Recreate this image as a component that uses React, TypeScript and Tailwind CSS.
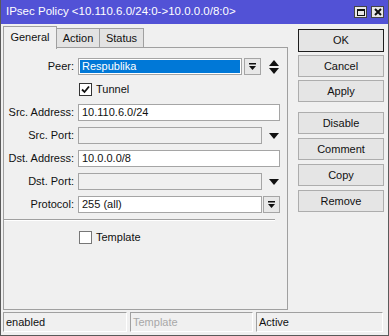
import React from "react";

const font = { fontFamily: '"Liberation Sans", Arial, sans-serif' };

function BarArrow() {
  return (
    <svg width="9" height="9" viewBox="0 0 9 9">
      <rect x="1" y="1" width="7" height="1.5" fill="#111" />
      <path d="M1 4 L8 4 L4.5 8 Z" fill="#111" />
    </svg>
  );
}

function DownArrow() {
  return (
    <svg width="10" height="6" viewBox="0 0 10 6">
      <path d="M0 0 L10 0 L5 6 Z" fill="#111" />
    </svg>
  );
}

function UpDown() {
  return (
    <svg width="10" height="14" viewBox="0 0 10 14">
      <path d="M5 0 L10 6 L0 6 Z" fill="#111" />
      <path d="M0 8 L10 8 L5 14 Z" fill="#111" />
    </svg>
  );
}

function Check({ checked }: { checked: boolean }) {
  return (
    <div className="w-[13px] h-[13px] bg-white border border-[#333] flex items-center justify-center">
      {checked && (
        <svg width="9" height="9" viewBox="0 0 9 9">
          <path d="M1 4.5 L3.5 7 L8 1.5" stroke="#111" strokeWidth="1.8" fill="none" />
        </svg>
      )}
    </div>
  );
}

function Label({ text }: { text: string }) {
  return <div className="w-[71px] text-right pr-[1px] shrink-0">{text}</div>;
}

function Row({ children }: { children: React.ReactNode }) {
  return <div className="flex items-center h-[17px] gap-[3px]">{children}</div>;
}

function Field({ value, w, disabled }: { value?: string; w: string; disabled?: boolean }) {
  return (
    <div
      className={`${w} h-[17px] border border-[#a5a5a5] pl-[3px] flex items-center ${
        disabled ? "bg-[#f0f0f0]" : "bg-white"
      }`}
    >
      {value}
    </div>
  );
}

function Btn({ label, def }: { label: string; def?: boolean }) {
  return (
    <div
      className={`w-[86px] flex items-center justify-center bg-[#e5e5e5] border ${
        def ? "h-[23px] border-[#1e1e1e]" : "h-[22px] border-[#adadad]"
      }`}
    >
      {label}
    </div>
  );
}

function Status({ text, dim, w }: { text: string; dim?: boolean; w: string }) {
  return (
    <div
      className={`${w} h-[20px] border-t border-l border-[#a0a0a0] border-b-white border-r-white border-b border-r pl-[2px] flex items-center ${
        dim ? "text-[#a8a8a8]" : "text-[#111]"
      }`}
    >
      {text}
    </div>
  );
}

export default function App() {
  return (
    <div
      className="w-[389px] h-[336px] flex flex-col bg-[#f0f0f0] border-x border-b border-[#5a5a5a] text-[11px] text-[#111]"
      style={font}
    >
      <div className="h-[24px] bg-[#5252d6] flex items-center justify-between pl-[5px] pr-[4px] text-white text-[11.5px]">
        <span>IPsec Policy &lt;10.110.6.0/24:0-&gt;10.0.0.0/8:0&gt;</span>
        <div className="flex gap-[4px]">
          <div className="w-[13px] h-[12px] bg-[#e8e8e8] border border-[#444] flex items-center justify-center">
            <div className="w-[8px] h-[7px] border border-[#111] border-t-2" />
          </div>
          <div className="w-[13px] h-[12px] bg-[#e8e8e8] border border-[#444] flex items-center justify-center">
            <svg width="8" height="8" viewBox="0 0 8 8">
              <path d="M1 1 L7 7 M7 1 L1 7" stroke="#111" strokeWidth="2" />
            </svg>
          </div>
        </div>
      </div>

      <div className="flex mt-[2px] h-[284px]">
        <div className="ml-[2px] w-[285px] flex flex-col">
          <div className="flex items-end h-[22px]">
            <div className="w-[54px] h-[23px] border border-b-0 border-[#a0a0a0] bg-[#f0f0f0] flex items-center justify-center pb-[2px] relative top-[1px]">
              General
            </div>
            <div className="w-[43px] h-[20px] border-t border-r border-b border-[#a0a0a0] bg-[#e3e3e3] flex items-center justify-center">
              Action
            </div>
            <div className="w-[44px] h-[20px] border-t border-r border-b border-[#a0a0a0] bg-[#e3e3e3] flex items-center justify-center">
              Status
            </div>
            <div className="flex-1 border-b border-[#a0a0a0]" />
          </div>
          <div className="flex-1 border-x border-b border-[#a0a0a0] pt-[10px] flex flex-col gap-[6px]">
            <Row>
              <Label text="Peer:" />
              <div className="w-[164px] h-[17px] border border-[#a5a5a5] bg-white p-[1px]">
                <div className="h-full bg-[#0078d7] text-white pl-[2px] flex items-center">Respublika</div>
              </div>
              <div className="ml-[-1px] w-[17px] h-[17px] border border-[#a5a5a5] bg-[#e8e8e8] flex items-center justify-center">
                <BarArrow />
              </div>
              <div className="ml-[5px]">
                <UpDown />
              </div>
            </Row>
            <Row>
              <div className="w-[71px] shrink-0" />
              <div className="ml-[1px] flex items-center gap-[4px]">
                <Check checked />
                <span>Tunnel</span>
              </div>
            </Row>
            <Row>
              <Label text="Src. Address:" />
              <Field value="10.110.6.0/24" w="w-[202px]" />
            </Row>
            <Row>
              <Label text="Src. Port:" />
              <Field w="w-[184px]" disabled />
              <div className="ml-[4px]">
                <DownArrow />
              </div>
            </Row>
            <Row>
              <Label text="Dst. Address:" />
              <Field value="10.0.0.0/8" w="w-[202px]" />
            </Row>
            <Row>
              <Label text="Dst. Port:" />
              <Field w="w-[184px]" disabled />
              <div className="ml-[4px]">
                <DownArrow />
              </div>
            </Row>
            <Row>
              <Label text="Protocol:" />
              <Field value="255 (all)" w="w-[184px]" />
              <div className="ml-[-2px] w-[17px] h-[17px] border border-[#a5a5a5] bg-[#e8e8e8] flex items-center justify-center">
                <BarArrow />
              </div>
            </Row>
            <div className="mr-[12px] border-t border-[#a0a0a0] border-b border-b-white" />
            <Row>
              <div className="w-[71px] shrink-0" />
              <div className="ml-[1px] mt-[4px] flex items-center gap-[4px]">
                <div className="w-[13px] h-[13px] bg-white border border-[#777]" />
                <span>Template</span>
              </div>
            </Row>
          </div>
        </div>

        <div className="ml-[10px] mt-[3px] flex flex-col gap-[3px]">
          <Btn label="OK" def />
          <Btn label="Cancel" />
          <Btn label="Apply" />
          <div className="mt-[7px] flex flex-col gap-[4px]">
            <Btn label="Disable" />
            <Btn label="Comment" />
            <Btn label="Copy" />
            <Btn label="Remove" />
          </div>
        </div>
      </div>

      <div className="flex mt-[2px] ml-[2px] gap-[3px]">
        <Status text="enabled" w="w-[124px]" />
        <Status text="Template" dim w="w-[123px]" />
        <Status text="Active" w="w-[127px]" />
      </div>
    </div>
  );
}
